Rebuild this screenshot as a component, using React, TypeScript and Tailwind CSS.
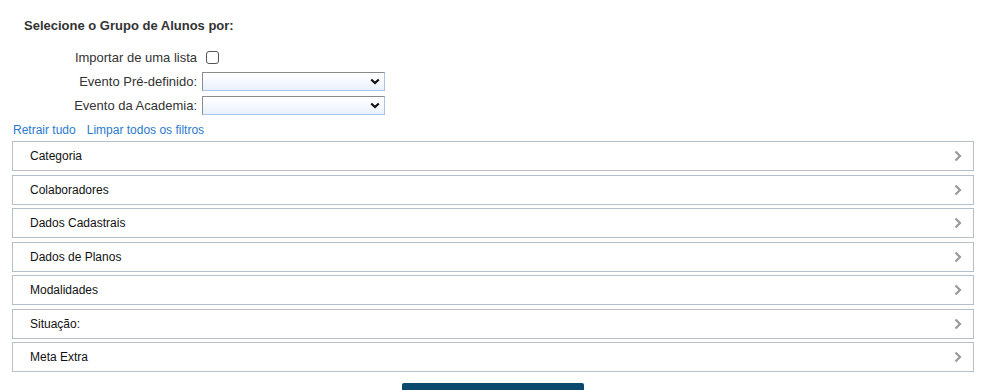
import React from "react";

const rows = [
  "Categoria",
  "Colaboradores",
  "Dados Cadastrais",
  "Dados de Planos",
  "Modalidades",
  "Situação:",
  "Meta Extra",
];

function Chevron() {
  return (
    <svg width="8" height="12" viewBox="0 0 8 12" className="shrink-0">
      <path d="M1.5 1.5 L6 6 L1.5 10.5" fill="none" stroke="#9a9a9a" strokeWidth="2.2" />
    </svg>
  );
}

function Select() {
  return (
    <div className="w-[183px] h-[19px] border border-[#8a8a8a] border-b-[#a9c3e6] border-r-[#a9c3e6] bg-gradient-to-b from-white to-[#eaf1fc] flex items-center justify-end pr-[4px]">
      <svg width="10" height="7" viewBox="0 0 10 7">
        <path d="M1.2 1.5 L5 5 L8.8 1.5" fill="none" stroke="#111" strokeWidth="2.2" />
      </svg>
    </div>
  );
}

export default function App() {
  return (
    <div className="w-[986px] h-[390px] overflow-hidden bg-white font-['Liberation_Sans',Arial,sans-serif] text-[#333]">
      <div className="pl-[24px] pt-[18px] text-[13px] font-bold leading-[16px] text-[#333]">
        Selecione o Grupo de Alunos por:
      </div>
      <div className="mt-[14px] flex flex-col gap-[5px]">
        <div className="flex items-center h-[19px]">
          <span className="w-[197px] text-right text-[13px]">Importar de uma lista</span>
          <span className="ml-[9px] w-[13px] h-[13px] border border-[#555] rounded-[3px] bg-white" />
        </div>
        <div className="flex items-center h-[19px]">
          <span className="w-[197px] text-right text-[13px]">Evento Pré-definido:</span>
          <span className="ml-[5px]"><Select /></span>
        </div>
        <div className="flex items-center h-[19px]">
          <span className="w-[197px] text-right text-[13px]">Evento da Academia:</span>
          <span className="ml-[5px]"><Select /></span>
        </div>
      </div>
      <div className="mt-[7px] pl-[13px] flex gap-[11px] text-[12px] leading-[16px] text-[#2a7bd0]">
        <span>Retrair tudo</span>
        <span>Limpar todos os filtros</span>
      </div>
      <div className="mt-[3px] mx-[12px] flex flex-col gap-[3.5px]">
        {rows.map((r) => (
          <div
            key={r}
            className="h-[30px] border border-[#b4bfca] flex items-center justify-between pl-[17px] pr-[11px] text-[12px] text-[#111]"
          >
            <span>{r}</span>
            <Chevron />
          </div>
        ))}
      </div>
      <div className="mt-[11px] flex justify-center">
        <div className="ml-[-1px] w-[182px] h-[30px] bg-[#0b4a6e] rounded-t-[2px]" />
      </div>
    </div>
  );
}
